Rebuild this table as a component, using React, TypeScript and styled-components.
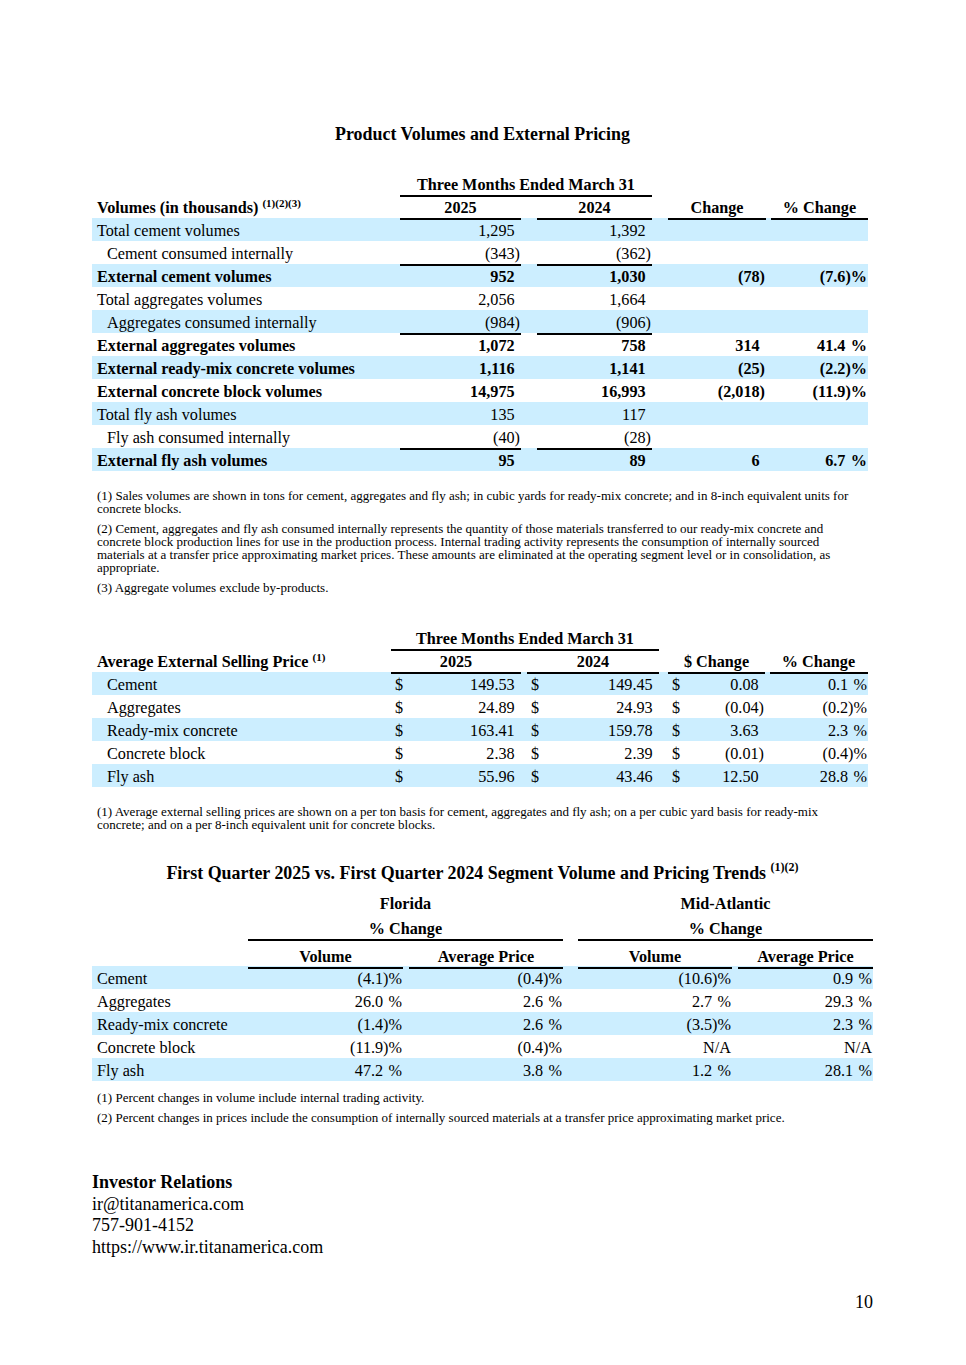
import React from 'react';
import styled, { createGlobalStyle } from 'styled-components';

const Global = createGlobalStyle`
  html, body { margin: 0; padding: 0; background: #fff; }
  body { font-family: "Liberation Serif", "Times New Roman", serif; color: #000; }
  * { box-sizing: border-box; }
`;

const SHADE = '#cceeff';

const Page = styled.div`
  width: 781px;
  margin-left: 92px;
  padding: 124px 0 40px 0;
  font-size: 16.2px;
`;

const Title = styled.h2<{ $mt: number }>`
  margin: ${p => p.$mt}px 0 0;
  font-size: 17.9px;
  font-weight: bold;
  line-height: 20px;
  text-align: center;
`;

const Sup = styled.sup<{ $size?: number; $lift?: number }>`
  font-size: ${p => p.$size ?? 11}px;
  vertical-align: ${p => p.$lift ?? 6}px;
  line-height: 0;
`;

const Table = styled.div<{ $mt: number }>`
  margin-top: ${p => p.$mt}px;
`;

const Row = styled.div<{ $cols: string; $shade?: boolean; $h?: number; $pt?: number }>`
  display: grid;
  width: fit-content;
  grid-template-columns: ${p => p.$cols};
  height: ${p => p.$h ?? 23}px;
  padding-top: ${p => p.$pt ?? 0}px;
  background: ${p => (p.$shade ? SHADE : 'transparent')};
`;

const Cell = styled.div<{
  $gap?: number;
  $rule?: boolean;
  $align?: 'left' | 'right' | 'center' | 'split';
  $pl?: number;
  $pr?: number;
  $bold?: boolean;
  $span?: string;
}>`
  grid-column: ${p => p.$span ?? 'auto'};
  margin-left: ${p => p.$gap ?? 0}px;
  display: flex;
  align-items: center;
  justify-content: ${p =>
    p.$align === 'right'
      ? 'flex-end'
      : p.$align === 'center'
      ? 'center'
      : p.$align === 'split'
      ? 'space-between'
      : 'flex-start'};
  padding: 4px ${p => p.$pr ?? 0}px 0 ${p => p.$pl ?? 0}px;
  border-bottom: 2px solid ${p => (p.$rule ? '#000' : 'transparent')};
  font-weight: ${p => (p.$bold ? 'bold' : 'normal')};
  white-space: nowrap;
`;

const Label = styled.span``;

const Ghost = styled.span`
  visibility: hidden;
`;

const Notes = styled.div<{ $mt: number; $gap: number }>`
  margin-top: ${p => p.$mt}px;
  display: flex;
  flex-direction: column;
  gap: ${p => p.$gap}px;
`;

const Note = styled.p`
  margin: 0;
  width: 760px;
  font-size: 13px;
  line-height: 13px;
  padding-left: 5px;
`;

const Contact = styled.div`
  margin-top: 48px;
  font-size: 18px;
  line-height: 21.5px;
`;

const ContactHead = styled.div`
  font-weight: bold;
`;

const PageNum = styled.div`
  margin-top: 33px;
  font-size: 18px;
  line-height: 22px;
  text-align: right;
`;

function Num({ v }: { v: string }) {
  if (!v) return null;
  if (v === 'N/A') return <>{v}</>;
  if (v.endsWith(')') || v.endsWith(')%')) return <>{v}</>;
  if (v.endsWith('%')) {
    return (
      <>
        {v.slice(0, -1)}
        <Ghost>)</Ghost>%
      </>
    );
  }
  return (
    <>
      {v}
      <Ghost>)</Ghost>
    </>
  );
}

/* ---------- Table 1 ---------- */
const G1 = '308px 121px 131px 114px 102px';

type R1 = {
  label: string;
  indent?: boolean;
  bold?: boolean;
  shade?: boolean;
  a: string;
  b: string;
  c?: string;
  d?: string;
  rule?: boolean;
};

const rows1: R1[] = [
  { label: 'Total cement volumes', shade: true, a: '1,295', b: '1,392' },
  { label: 'Cement consumed internally', indent: true, a: '(343)', b: '(362)', rule: true },
  { label: 'External cement volumes', bold: true, shade: true, a: '952', b: '1,030', c: '(78)', d: '(7.6)%' },
  { label: 'Total aggregates volumes', a: '2,056', b: '1,664' },
  { label: 'Aggregates consumed internally', indent: true, shade: true, a: '(984)', b: '(906)', rule: true },
  { label: 'External aggregates volumes', bold: true, a: '1,072', b: '758', c: '314', d: '41.4%' },
  { label: 'External ready-mix concrete volumes', bold: true, shade: true, a: '1,116', b: '1,141', c: '(25)', d: '(2.2)%' },
  { label: 'External concrete block volumes', bold: true, a: '14,975', b: '16,993', c: '(2,018)', d: '(11.9)%' },
  { label: 'Total fly ash volumes', shade: true, a: '135', b: '117' },
  { label: 'Fly ash consumed internally', indent: true, a: '(40)', b: '(28)', rule: true },
  { label: 'External fly ash volumes', bold: true, shade: true, a: '95', b: '89', c: '6', d: '6.7%' },
];

function VolumesTable() {
  return (
    <Table $mt={28}>
      <Row $cols={G1}>
        <Cell />
        <Cell $span="2 / 4" $align="center" $rule $bold>
          Three Months Ended March 31
        </Cell>
      </Row>
      <Row $cols={G1}>
        <Cell $pl={5} $bold>
          <Label>
            Volumes (in thousands) <Sup>(1)(2)(3)</Sup>
          </Label>
        </Cell>
        <Cell $align="center" $rule $bold>2025</Cell>
        <Cell $gap={16} $align="center" $rule $bold>2024</Cell>
        <Cell $gap={16} $align="center" $rule $bold>Change</Cell>
        <Cell $gap={5} $align="center" $rule $bold>% Change</Cell>
      </Row>
      {rows1.map(r => (
        <Row key={r.label} $cols={G1} $shade={r.shade}>
          <Cell $pl={r.indent ? 15 : 5} $bold={r.bold}>{r.label}</Cell>
          <Cell $align="right" $pr={1} $rule={r.rule} $bold={r.bold}><Num v={r.a} /></Cell>
          <Cell $gap={16} $align="right" $pr={1} $rule={r.rule} $bold={r.bold}><Num v={r.b} /></Cell>
          <Cell $gap={16} $align="right" $pr={1} $bold={r.bold}><Num v={r.c ?? ''} /></Cell>
          <Cell $gap={5} $align="right" $pr={1} $bold={r.bold}><Num v={r.d ?? ''} /></Cell>
        </Row>
      ))}
    </Table>
  );
}

/* ---------- Table 2 ---------- */
const G2 = '299px 130px 138px 106px 103px';

const rows2 = [
  { label: 'Cement', shade: true, a: '149.53', b: '149.45', c: '0.08', d: '0.1%' },
  { label: 'Aggregates', a: '24.89', b: '24.93', c: '(0.04)', d: '(0.2)%' },
  { label: 'Ready-mix concrete', shade: true, a: '163.41', b: '159.78', c: '3.63', d: '2.3%' },
  { label: 'Concrete block', a: '2.38', b: '2.39', c: '(0.01)', d: '(0.4)%' },
  { label: 'Fly ash', shade: true, a: '55.96', b: '43.46', c: '12.50', d: '28.8%' },
];

function PriceTable() {
  return (
    <Table $mt={32}>
      <Row $cols={G2}>
        <Cell />
        <Cell $span="2 / 4" $align="center" $rule $bold>
          Three Months Ended March 31
        </Cell>
      </Row>
      <Row $cols={G2}>
        <Cell $pl={5} $bold>
          <Label>
            Average External Selling Price <Sup>(1)</Sup>
          </Label>
        </Cell>
        <Cell $align="center" $rule $bold>2025</Cell>
        <Cell $gap={6} $align="center" $rule $bold>2024</Cell>
        <Cell $gap={9} $align="center" $rule $bold>$ Change</Cell>
        <Cell $gap={5} $pr={1} $align="center" $rule $bold>% Change</Cell>
      </Row>
      {rows2.map(r => (
        <Row key={r.label} $cols={G2} $shade={r.shade}>
          <Cell $pl={15}>{r.label}</Cell>
          <Cell $align="split" $pl={4} $pr={1}>
            <span>$</span>
            <span><Num v={r.a} /></span>
          </Cell>
          <Cell $gap={6} $align="split" $pl={4} $pr={1}>
            <span>$</span>
            <span><Num v={r.b} /></span>
          </Cell>
          <Cell $gap={9} $align="split" $pl={4} $pr={1}>
            <span>$</span>
            <span><Num v={r.c} /></span>
          </Cell>
          <Cell $gap={5} $align="right" $pr={1}><Num v={r.d} /></Cell>
        </Row>
      ))}
    </Table>
  );
}

/* ---------- Table 3 ---------- */
const G3 = '156px 155px 160px 169px 141px';

const rows3 = [
  { label: 'Cement', shade: true, v: ['(4.1)%', '(0.4)%', '(10.6)%', '0.9%'] },
  { label: 'Aggregates', v: ['26.0%', '2.6%', '2.7%', '29.3%'] },
  { label: 'Ready-mix concrete', shade: true, v: ['(1.4)%', '2.6%', '(3.5)%', '2.3%'] },
  { label: 'Concrete block', v: ['(11.9)%', '(0.4)%', 'N/A', 'N/A'] },
  { label: 'Fly ash', shade: true, v: ['47.2%', '3.8%', '1.2%', '28.1%'] },
];

const gaps3 = [0, 6, 15, 6];

function SegmentTable() {
  return (
    <Table $mt={8}>
      <Row $cols={G3} $h={25}>
        <Cell />
        <Cell $span="2 / 4" $align="center" $bold>Florida</Cell>
        <Cell $span="4 / 6" $gap={15} $align="center" $bold>Mid-Atlantic</Cell>
      </Row>
      <Row $cols={G3} $h={25}>
        <Cell />
        <Cell $span="2 / 4" $align="center" $rule $bold>% Change</Cell>
        <Cell $span="4 / 6" $gap={15} $align="center" $rule $bold>% Change</Cell>
      </Row>
      <Row $cols={G3} $h={25} $pt={3}>
        <Cell />
        <Cell $align="center" $rule $bold>Volume</Cell>
        <Cell $gap={6} $align="center" $rule $bold>Average Price</Cell>
        <Cell $gap={15} $align="center" $rule $bold>Volume</Cell>
        <Cell $gap={6} $align="center" $rule $bold>Average Price</Cell>
      </Row>
      {rows3.map(r => (
        <Row key={r.label} $cols={G3} $shade={r.shade}>
          <Cell $pl={5}>{r.label}</Cell>
          {r.v.map((x, i) => (
            <Cell key={i} $gap={gaps3[i]} $align="right" $pr={1}>
              <Num v={x} />
            </Cell>
          ))}
        </Row>
      ))}
    </Table>
  );
}

export default function App() {
  return (
    <>
      <Global />
      <Page>
        <Title $mt={0}>Product Volumes and External Pricing</Title>
        <VolumesTable />
        <Notes $mt={18} $gap={7}>
          <Note>
            (1) Sales volumes are shown in tons for cement, aggregates and fly ash; in cubic yards for ready-mix
            concrete; and in 8-inch equivalent units for concrete blocks.
          </Note>
          <Note>
            (2) Cement, aggregates and fly ash consumed internally represents the quantity of those materials
            transferred to our ready-mix concrete and concrete block production lines for use in the production
            process. Internal trading activity represents the consumption of internally sourced materials at a
            transfer price approximating market prices. These amounts are eliminated at the operating segment level
            or in consolidation, as appropriate.
          </Note>
          <Note>(3) Aggregate volumes exclude by-products.</Note>
        </Notes>

        <PriceTable />
        <Notes $mt={18} $gap={7}>
          <Note>
            (1) Average external selling prices are shown on a per ton basis for cement, aggregates and fly ash; on a
            per cubic yard basis for ready-mix concrete; and on a per 8-inch equivalent unit for concrete blocks.
          </Note>
        </Notes>

        <Title $mt={32}>
          First Quarter 2025 vs. First Quarter 2024 Segment Volume and Pricing Trends{' '}
          <Sup $size={12} $lift={8}>(1)(2)</Sup>
        </Title>
        <SegmentTable />
        <Notes $mt={10} $gap={7}>
          <Note>(1) Percent changes in volume include internal trading activity.</Note>
          <Note>
            (2) Percent changes in prices include the consumption of internally sourced materials at a transfer price
            approximating market price.
          </Note>
        </Notes>

        <Contact>
          <ContactHead>Investor Relations</ContactHead>
          <div>ir@titanamerica.com</div>
          <div>757-901-4152</div>
          <div>https://www.ir.titanamerica.com</div>
        </Contact>
        <PageNum>10</PageNum>
      </Page>
    </>
  );
}
